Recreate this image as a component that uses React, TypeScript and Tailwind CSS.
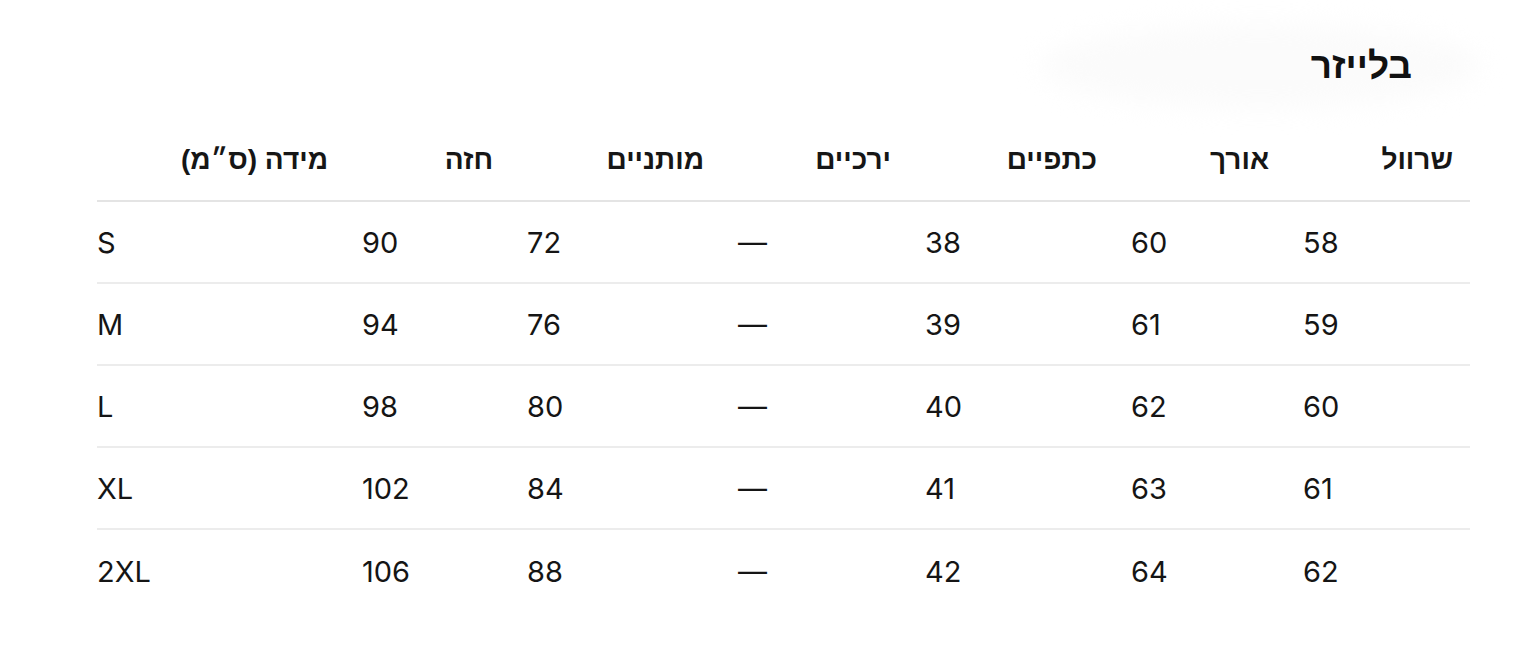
import React from "react";

const headers = ["מידה (ס״מ)", "חזה", "מותניים", "ירכיים", "כתפיים", "אורך", "שרוול"];
const rows = [
  ["S", "90", "72", "—", "38", "60", "58"],
  ["M", "94", "76", "—", "39", "61", "59"],
  ["L", "98", "80", "—", "40", "62", "60"],
  ["XL", "102", "84", "—", "41", "63", "61"],
  ["2XL", "106", "88", "—", "42", "64", "62"],
];

const grid = "grid grid-cols-[248px_165px_211px_187px_206px_172px_184px]";

export default function App() {
  return (
    <div
      className="relative w-[1534px] h-[647px] bg-white overflow-hidden text-[#111]"
      style={{ fontFamily: "Inter, 'Liberation Sans', 'DejaVu Sans', sans-serif" }}
    >
      <div className="absolute left-[1040px] top-[24px] w-[440px] h-[84px] rounded-[50%] bg-[#fbfbfb] blur-[12px]" />
      <div className="relative pl-[97px] pr-[64px]">
        <div className="h-[120px] flex items-center justify-end pr-[58px] pt-[10px]">
          <h1 dir="rtl" className="text-[37px] font-bold leading-none" style={{ fontFamily: "'Liberation Sans', sans-serif" }}>
            בלייזר
          </h1>
        </div>
        <div className={`${grid} h-[82px] items-center border-b-2 border-[#e4e4e4]`}>
          {headers.map((h) => (
            <div
              key={h}
              dir="rtl"
              className="text-right pl-[17px] text-[28px] font-bold leading-none text-[#161616]"
              style={{ fontFamily: "'Liberation Sans', sans-serif" }}
            >
              <span className="pr-[17px]">{h}</span>
            </div>
          ))}
        </div>
        {rows.map((r, i) => (
          <div
            key={r[0]}
            className={`${grid} h-[82px] items-center ${i < rows.length - 1 ? "border-b-2 border-[#ececec]" : ""}`}
          >
            {r.map((c, j) => (
              <div key={j} className={`text-left text-[29px] leading-none text-[#151515] ${j === 0 ? "" : "pl-[17px]"}`}>
                {c}
              </div>
            ))}
          </div>
        ))}
      </div>
    </div>
  );
}
